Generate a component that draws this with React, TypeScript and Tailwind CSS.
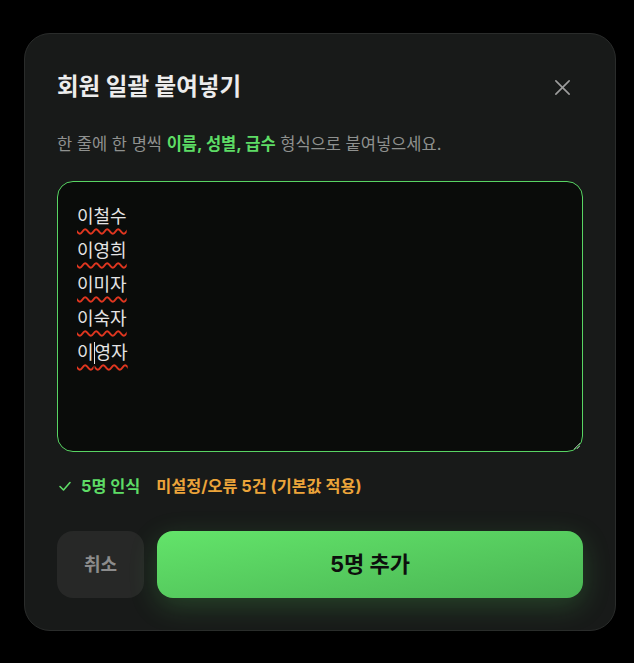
import React from 'react';

const names = ['이철수', '이영희', '이미자', '이숙자', '이영자'];

const font = { fontFamily: 'Inter, "Noto Sans CJK KR", sans-serif' };

const App = () => {
  return (
    <div className="min-h-[663px] w-full bg-black pt-[33px]" style={font}>
      <div className="ml-[24px] w-[592px] rounded-[26px] border border-[#2a2c2b] bg-[#181a19] px-8 pt-[38px] pb-[32px]">
        {/* Header */}
        <div className="flex items-center justify-between">
          <h2 className="text-[23.5px] leading-[30px] font-bold text-[#ececec]">회원 일괄 붙여넣기</h2>
          <button className="mr-[11px] text-[#9d9d9d]">
            <svg width="19" height="19" viewBox="0 0 20 20" fill="none" stroke="currentColor" strokeWidth="1.7" strokeLinecap="round">
              <path d="M3 3L17 17M17 3L3 17" />
            </svg>
          </button>
        </div>

        <p className="mt-[30px] text-[16.5px] leading-6 text-[#8f918f]">
          한 줄에 한 명씩 <span className="font-bold text-[#5edc66]">이름, 성별, 급수</span> 형식으로 붙여넣으세요.
        </p>

        {/* Paste area */}
        <div className="relative mt-[25px] h-[271px] rounded-2xl border border-[#58d463] bg-[#0a0c0a] px-[19px] pt-[18px]">
          {names.map((n, i) => (
            <div key={i} className="text-[18px] leading-[34px] text-[#e4e4e4]">
              <span className="underline decoration-wavy decoration-[#e0361f] decoration-[1.5px] underline-offset-[5px]">
                {i === 4 ? (
                  <>
                    이<span className="inline-block h-[22px] w-px translate-y-[5px] bg-[#e4e4e4]" />영자
                  </>
                ) : (
                  n
                )}
              </span>
            </div>
          ))}
          <svg className="absolute right-[1px] bottom-[1px]" width="10" height="10" viewBox="0 0 10 10" stroke="#8a8a8a" strokeWidth="1">
            <path d="M9 3L3 9M9 6L6 9" />
          </svg>
        </div>

        {/* Status */}
        <div className="mt-6 flex items-center text-[16.3px] leading-5 font-bold">
          <svg width="14" height="14" viewBox="0 0 14 14" fill="none" stroke="#5edc66" strokeWidth="1.6" strokeLinecap="round" strokeLinejoin="round" className="mr-[9px] ml-[1px]">
            <path d="M2 7.5L5.5 11L12 3.5" />
          </svg>
          <span className="text-[#5edc66]">5명 인식</span>
          <span className="ml-[16px] text-[#eca43a]">미설정/오류 5건 (기본값 적용)</span>
        </div>

        {/* Actions */}
        <div className="mt-[35px] flex gap-[13px]">
          <button className="h-[67px] w-[87px] rounded-2xl bg-[#272827] text-[18px] font-bold text-[#8c8c8c]">취소</button>
          <button className="h-[67px] flex-1 rounded-2xl bg-linear-to-br from-[#63e46a] to-[#4ab554] text-[22px] font-bold text-[#0d0f0d] shadow-[0_8px_28px_rgba(90,220,100,0.22)]">
            5명 추가
          </button>
        </div>
      </div>
    </div>
  );
};

export default App;
